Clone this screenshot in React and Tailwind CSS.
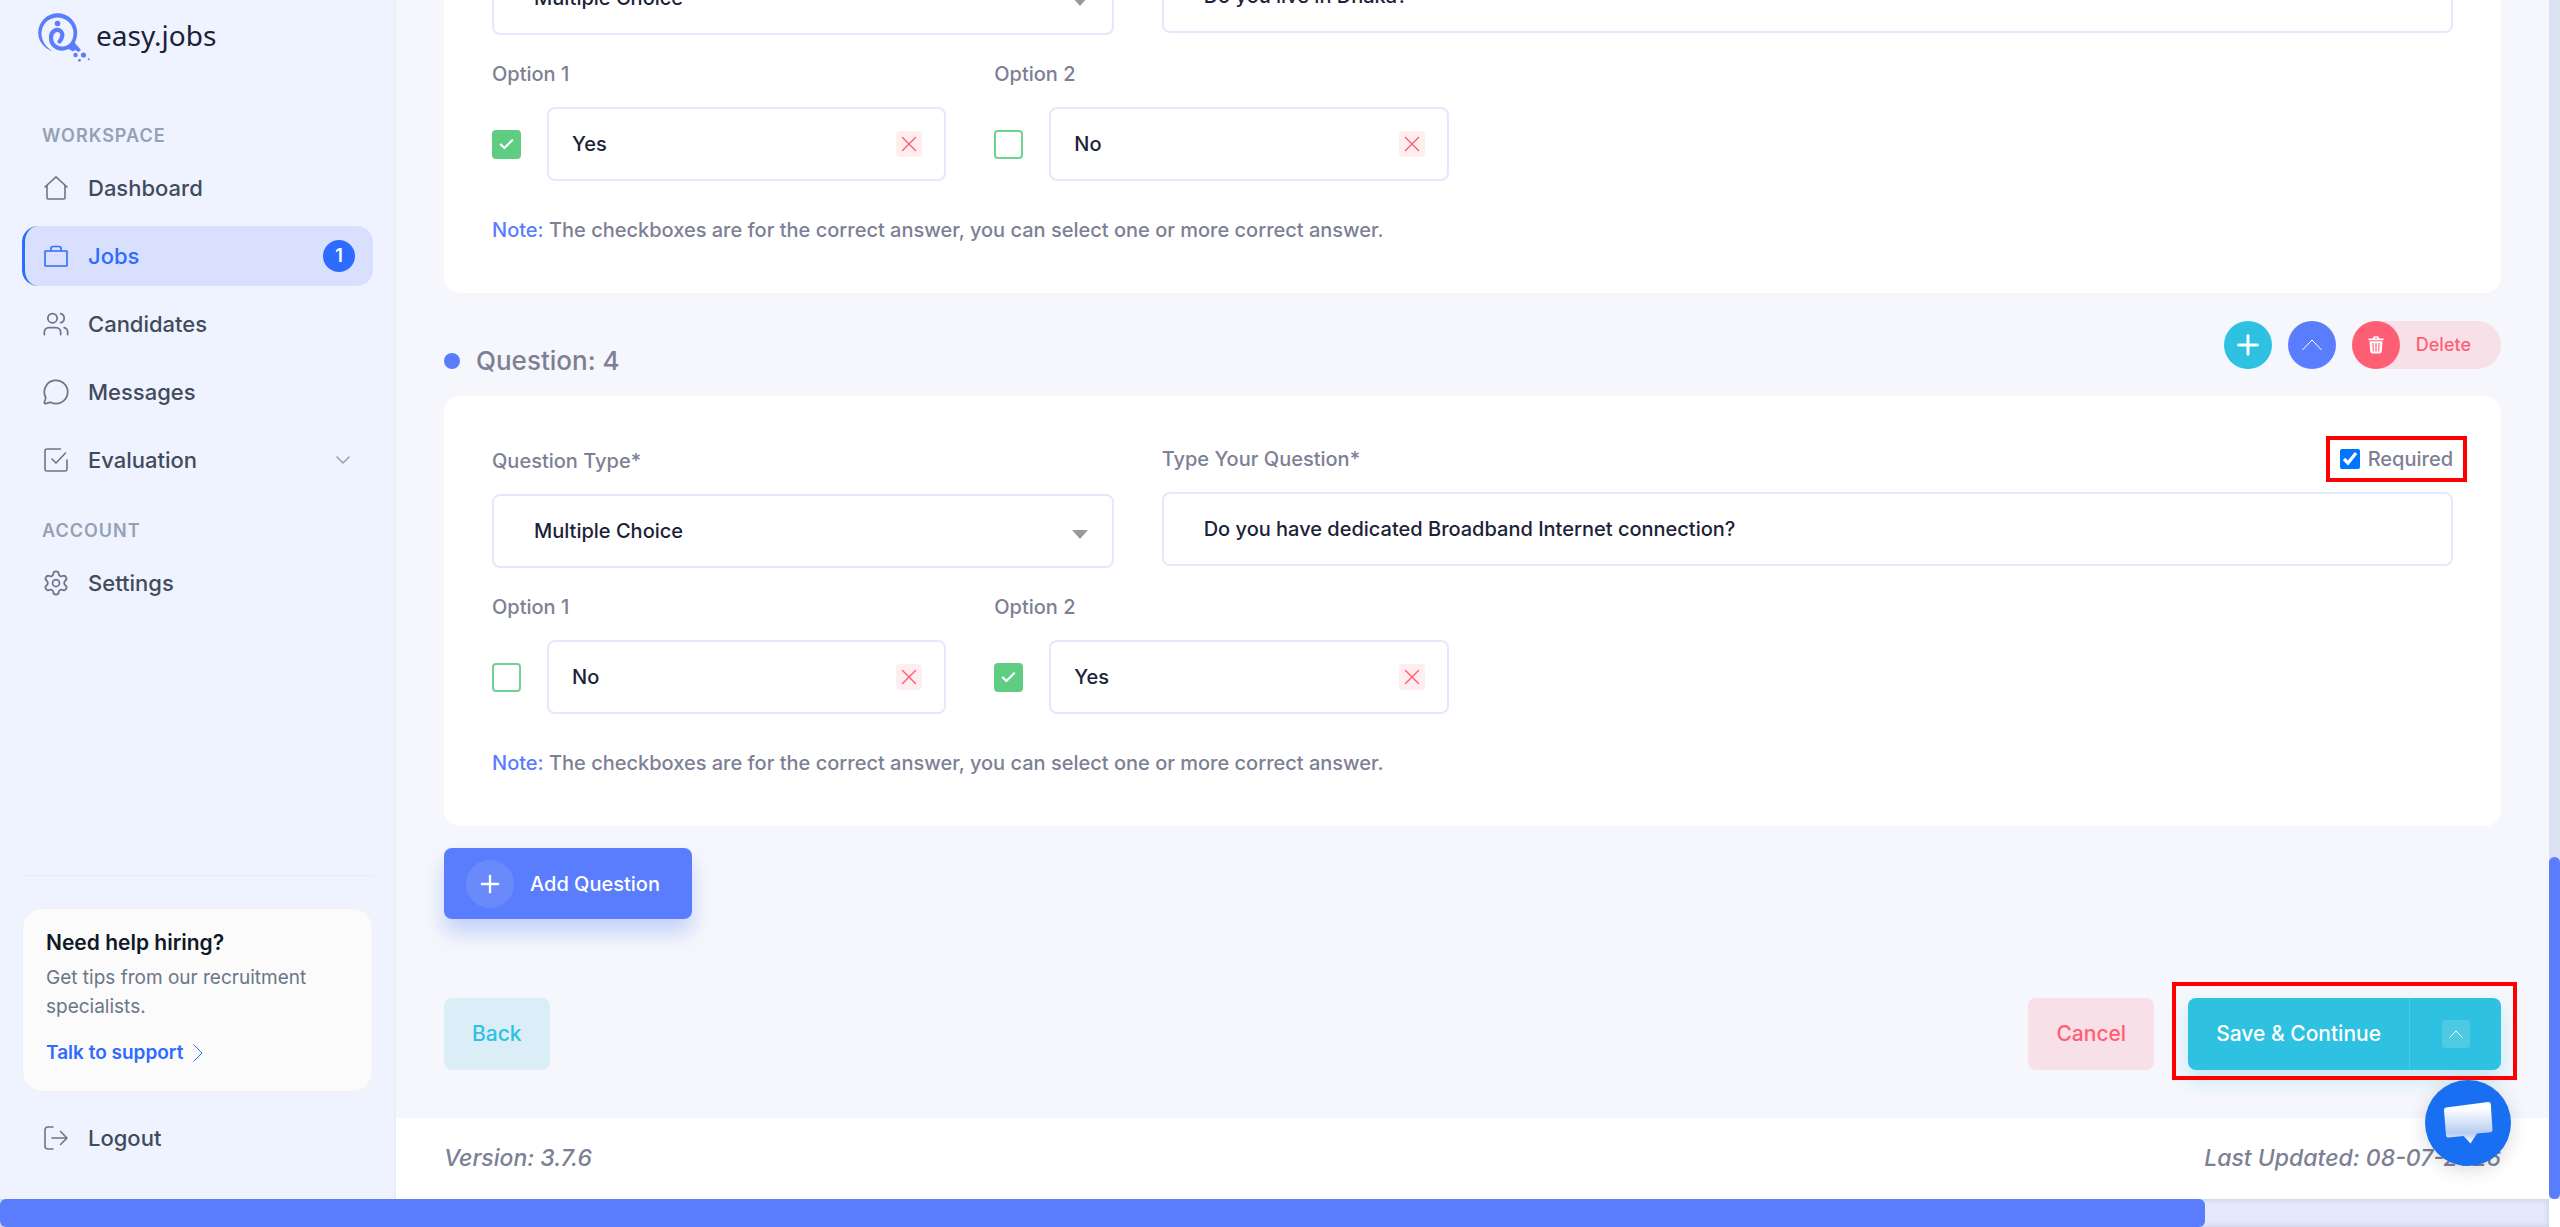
import {
  Check,
  ChevronDown,
  MessageCircle,
  Plus,
  Settings,
  Users,
  X,
} from "lucide-react";

function Logo() {
  return (
    <svg width="52" height="50" viewBox="0 0 52 50" fill="none">
      <path d="M14.500 38.500C5.500 35 .2 27.500 .2 19.800A19.500 19.500 0 0 1 39.200 19.800C39.200 24 38 28 36 31L33 29A16 16 0 1 0 3.500 19.800C3.200 27 7 33.500 14.500 38.500Z" fill="#597dfc" />
      <path
        d="M21.500 28.500C24.500 25 25.500 20.500 22.500 18C18.500 15.500 13 18 13 24.500C13 32 19 36.500 25.500 35.500C29.500 34.800 32.500 33 35 30"
        stroke="#597dfc"
        strokeWidth="4.200"
        strokeLinecap="round"
      />
      <circle cx="19.500" cy="10.500" r="2.800" fill="#597dfc" />
      <path d="M36.500 29.500L43 37L40.500 39L37 37L35 38.500L29.500 35.500Z" fill="#597dfc" />
      <circle cx="37.500" cy="42" r="2.200" fill="#597dfc" />
      <circle cx="45.500" cy="42" r="2.600" fill="#597dfc" />
      <circle cx="41.500" cy="47.300" r="1.400" fill="#597dfc" />
      <circle cx="50.700" cy="46.300" r="1" fill="#597dfc" />
    </svg>
  );
}

function HomeIcon() {
  return (
    <svg width="28" height="28" viewBox="0 0 28 28" fill="none" stroke="currentColor" strokeWidth="1.600" strokeLinejoin="round" strokeLinecap="round">
      <path d="M3 13L14 2.800L25 13" />
      <path d="M5 11.500V24Q5 25 6 25H22Q23 25 23 24V11.500" />
    </svg>
  );
}

function BriefcaseIcon() {
  return (
    <svg width="28" height="28" viewBox="0 0 28 28" fill="none" stroke="currentColor" strokeWidth="1.600" strokeLinejoin="round">
      <rect x="3" y="9" width="22" height="15" rx=".6" />
      <path d="M9 9V6.500Q9 4.500 11 4.500H17Q19 4.500 19 6.500V9" />
    </svg>
  );
}

function EvaluationIcon() {
  return (
    <svg width="28" height="28" viewBox="0 0 28 28" fill="none" stroke="currentColor" strokeWidth="1.600" strokeLinejoin="round" strokeLinecap="round">
      <path d="M18.500 3H5Q3 3 3 5V23Q3 25 5 25H23Q25 25 25 23V14" />
      <path d="M10 13L14 17L23.500 7" />
    </svg>
  );
}

function LogoutIcon() {
  return (
    <svg width="28" height="28" viewBox="0 0 28 28" fill="none" stroke="currentColor" strokeWidth="1.600" strokeLinejoin="round" strokeLinecap="round">
      <path d="M11 3H6Q3 3 3 6V22Q3 25 6 25H11" />
      <path d="M10 14H25M18.500 7.500L25 14L18.500 20.500" />
    </svg>
  );
}

function TrashIcon() {
  return (
    <svg width="16" height="18" viewBox="0 0 16 18" fill="#fff">
      <path d="M5 2.500V1.800Q5 .3 6.500 .3H9.500Q11 .3 11 1.800V2.500H15.500V4.200H.5V2.500ZM6.500 2.500H9.500V1.700H6.500Z" />
      <path fillRule="evenodd" d="M1.500 5.200H14.500L13.700 15.500Q13.500 17.500 11.500 17.500H4.500Q2.500 17.500 2.300 15.500ZM4.300 7L4.800 15.500H5.900L5.400 7ZM7.400 7V15.500H8.600V7ZM10.600 7L10.100 15.500H11.200L11.700 7Z" />
    </svg>
  );
}

function ChatIcon() {
  return (
    <svg width="50" height="44" viewBox="0 0 50 44">
      <defs>
        <linearGradient id="bubble" x1="0" y1="0" x2="0" y2="1">
          <stop offset="0.150" stopColor="#fff" />
          <stop offset="0.750" stopColor="#b7ccf3" />
          <stop offset="1" stopColor="#fff" />
        </linearGradient>
      </defs>
      <path
        d="M3 6.500L45 1Q47.500 .8 47.800 3L49.500 29Q49.500 31 47.500 31.300L34 32.500L27.500 42.500L20.500 35L5.500 36.500Q3.200 36.600 3 34.500L1 9Q.8 6.800 3 6.500Z"
        fill="url(#bubble)"
      />
    </svg>
  );
}

const workspaceLinks = [
  { label: "Dashboard", icon: <HomeIcon /> },
  { label: "Jobs", icon: <BriefcaseIcon />, active: true, badge: 1 },
  { label: "Candidates", icon: <Users size={28} strokeWidth={1.5} /> },
  { label: "Messages", icon: <MessageCircle size={28} strokeWidth={1.5} /> },
  { label: "Evaluation", icon: <EvaluationIcon />, expandable: true },
];

function NavItem({ label, icon, active, badge, expandable }) {
  return (
    <a
      href="#"
      className={
        active
          ? "flex h-[60px] items-center rounded-2xl border-l-3 border-[#2e6bff] bg-[#d8e0fe] pr-[18px] pl-[17px] text-[#2e6bff]"
          : "flex h-[60px] items-center pr-[18px] pl-5 text-[#6b7688]"
      }
    >
      {icon}
      <span className={active ? "ml-[18px] text-[22px] font-medium" : "ml-[18px] text-[22px] font-medium text-[#414b5c]"}>{label}</span>
      {badge && (
        <span className="ml-auto flex size-8 items-center justify-center rounded-full bg-[#2e6bff] text-lg font-semibold text-white">
          {badge}
        </span>
      )}
      {expandable && <ChevronDown size={24} strokeWidth={1.5} className="ml-auto text-[#94a1b5]" />}
    </a>
  );
}

function Sidebar() {
  return (
    <aside className="flex w-[396px] shrink-0 flex-col border-r-2 border-[#e6eefa] bg-[#eff3ff] pr-[21px] pl-[22px]">
      <a href="#" className="mt-[13px] flex items-start gap-1.5 pl-4">
        <Logo />
        <span className="font-['Noto_Sans',sans-serif] text-[28px] leading-[44px] text-[#1c2238]">easy.jobs</span>
      </a>
      <h2 className="mt-[59px] pl-5 text-lg leading-7 font-semibold tracking-[1px] text-[#94a1b5]">WORKSPACE</h2>
      <nav className="mt-2 flex flex-col gap-2">
        {workspaceLinks.map((link) => (
          <NavItem key={link.label} {...link} />
        ))}
      </nav>
      <h2 className="mt-[27px] pl-5 text-lg leading-7 font-semibold tracking-[1px] text-[#94a1b5]">ACCOUNT</h2>
      <nav className="mt-2">
        <NavItem label="Settings" icon={<Settings size={28} strokeWidth={1.5} />} />
      </nav>

      <div className="mt-auto border-t border-[#e7ebf5] pt-8 pb-[31px]">
        <section className="rounded-[20px] border border-[#f0f0f3] bg-[#fbfbfb] px-[23px] pt-5 pb-6">
          <h3 className="text-[21px] leading-7 font-semibold text-[#101828]">Need help hiring?</h3>
          <p className="mt-1.5 text-[19px] leading-[29px] text-[#6b7688]">Get tips from our recruitment specialists.</p>
          <a href="#" className="mt-[18px] flex items-center gap-2.5 text-[19px] leading-[28px] font-semibold text-[#2e6bff]">
            Talk to support
            <svg width="10" height="18" viewBox="0 0 10 18" fill="none" stroke="currentColor">
              <path d="M.5 .5L9 9L.5 17.500" />
            </svg>
          </a>
        </section>
        <div className="mt-4">
          <NavItem label="Logout" icon={<LogoutIcon />} />
        </div>
      </div>
    </aside>
  );
}

function QuestionHeader({ number }) {
  return (
    <header className="flex items-start justify-between pt-7 pb-4">
      <h2 className="mt-5 flex items-center gap-4 text-[26px] leading-[39px] font-medium text-[#7d8095]">
        <span className="size-4 rounded-full bg-[#597dfc]" />
        Question: {number}
      </h2>
      <div className="flex gap-4">
        <button aria-label="Add question" className="flex size-12 items-center justify-center rounded-full bg-[#2fc1e1] text-white">
          <Plus size={32} strokeWidth={2.2} />
        </button>
        <button aria-label="Collapse question" className="flex size-12 items-center justify-center rounded-full bg-[#597dfc] text-white">
          <svg width="20" height="12" viewBox="0 0 20 12" fill="none" stroke="currentColor">
            <path d="M.5 11L10 1L19.500 11" />
          </svg>
        </button>
        <button className="flex h-12 items-center rounded-full bg-[#f8e0e8] pr-[30px] text-lg font-medium text-[#ff5f74]">
          <span className="mr-4 flex size-12 items-center justify-center rounded-full bg-[#ff5f74]">
            <TrashIcon />
          </span>
          Delete
        </button>
      </div>
    </header>
  );
}

function Option({ id, number, value, correct }) {
  return (
    <div className="col-span-3">
      <label htmlFor={id} className="block leading-[30px] text-[#7d8095]">Option {number}</label>
      <div className="mt-[18px] flex items-center gap-[26px]">
        <span className="relative flex size-[29px] shrink-0">
          <input
            type="checkbox"
            defaultChecked={correct}
            aria-label={`Option ${number} is correct`}
            className="size-full appearance-none rounded-[4px] border-2 border-[#6dd391] bg-white checked:border-[#5ecd82] checked:bg-[#5ecd82]"
          />
          {correct && <Check size={17} strokeWidth={3} className="pointer-events-none absolute inset-1.5 text-white" />}
        </span>
        <div className="flex h-[74px] min-w-0 flex-1 items-center rounded-lg border-2 border-[#e3e8fe] pr-[22px] pl-[23px]">
          <input id={id} type="text" defaultValue={value} className="min-w-0 flex-1 text-[#1c2238] outline-none" />
          <button aria-label={`Remove option ${number}`} className="flex size-[26px] items-center justify-center rounded-[4px] bg-[#ffeef0] text-[#ff5f74]">
            <X size={28} strokeWidth={1.3} />
          </button>
        </div>
      </div>
    </div>
  );
}

function QuestionCard({ id, question, options, highlighted }) {
  return (
    <section className="rounded-2xl bg-white px-12 pt-12 pb-12 text-[20px] font-medium">
      <div className="grid grid-cols-12 gap-x-12">
        <div className="col-span-4 pt-0.5">
          <label htmlFor={`${id}-type`} className="block leading-[30px] text-[#7d8095]">Question Type*</label>
          <div className="relative mt-[18px]">
            <select
              id={`${id}-type`}
              defaultValue="Multiple Choice"
              className="h-[74px] w-full appearance-none rounded-lg border-2 border-[#e3e8fe] bg-white pl-10 text-[#1c2238]"
            >
              <option>Multiple Choice</option>
            </select>
            <svg width="16" height="9" viewBox="0 0 16 9" className="pointer-events-none absolute top-9 right-[26px]">
              <path d="M0 0H16L8 9Z" fill="#999" />
            </svg>
          </div>
        </div>
        <div className="col-span-8">
          <div className="flex items-center justify-between leading-[30px] text-[#7d8095]">
            <label htmlFor={`${id}-question`}>Type Your Question*</label>
            <label className="relative flex items-center gap-2">
              <input type="checkbox" defaultChecked className="size-5" />
              Required
              {highlighted && <span className="absolute -inset-x-3.5 -inset-y-2 border-4 border-[#ff0000]" />}
            </label>
          </div>
          <input
            id={`${id}-question`}
            type="text"
            defaultValue={question}
            className="mt-[18px] h-[74px] w-full rounded-lg border-2 border-[#e3e8fe] pl-10 text-[#1c2238]"
          />
        </div>
      </div>
      <div className="mt-6 grid grid-cols-12 gap-x-12">
        {options.map((option, i) => (
          <Option key={option.value} id={`${id}-option-${i}`} number={i + 1} {...option} />
        ))}
      </div>
      <p className="mt-[34px] leading-[30px] text-[#7d8095]">
        <span className="text-[#597dfc]">Note:</span> The checkboxes are for the correct answer, you can select one or more correct answer.
      </p>
    </section>
  );
}

function Content() {
  return (
    <main className="relative flex min-w-0 flex-1 flex-col justify-end overflow-hidden bg-[#f5f7fc]">
      <div className="shrink-0 px-12 pb-12">
        <QuestionCard
          id="q3"
          question="Do you live in Dhaka?"
          options={[{ value: "Yes", correct: true }, { value: "No" }]}
        />
        <QuestionHeader number={4} />
        <QuestionCard
          id="q4"
          question="Do you have dedicated Broadband Internet connection?"
          options={[{ value: "No" }, { value: "Yes", correct: true }]}
          highlighted
        />
        <button className="mt-[22px] flex h-[71px] items-center rounded-lg bg-[#597dfc] pr-8 pl-[22px] text-[20px] font-medium text-white shadow-[0_14px_20px_rgba(89,125,252,0.300)]">
          <span className="mr-4 flex size-12 items-center justify-center rounded-full bg-white/10">
            <Plus size={28} strokeWidth={2} />
          </span>
          Add Question
        </button>
        <div className="mt-[79px] flex items-center text-[21px] font-medium">
          <button className="h-[72px] rounded-lg bg-[#dbeef8] px-7 text-[#2fc1e1]">Back</button>
          <button className="ml-auto h-[72px] rounded-lg bg-[#f8e0e8] px-7 text-[#ff5f74]">Cancel</button>
          <div className="relative ml-[34px] flex h-[72px] rounded-lg bg-[#2fc1e1] text-white shadow-[0_10px_20px_rgba(47,193,225,0.250)]">
            <button className="px-7">Save &amp; Continue</button>
            <button aria-label="More save options" className="flex w-[92px] items-center justify-center border-l border-[#4acae6]">
              <span className="flex size-7 items-center justify-center rounded-[4px] bg-white/15">
                <svg width="14" height="8" viewBox="0 0 14 8" fill="none" stroke="currentColor">
                  <path d="M.5 7.500L7 1L13.500 7.500" />
                </svg>
              </span>
            </button>
            <span className="pointer-events-none absolute -inset-x-4 -top-4 -bottom-2.5 border-4 border-[#ff0000]" />
          </div>
        </div>
      </div>
      <footer className="flex h-[81px] shrink-0 items-center justify-between bg-white px-12 text-[23px] font-medium text-[#7d8095] italic">
        <span>Version: 3.7.6</span>
        <span>Last Updated: 08-07-2026</span>
      </footer>
      <button
        aria-label="Open chat"
        className="absolute right-[38px] bottom-[33px] flex size-[86px] items-center justify-center rounded-full bg-[#196ff2] shadow-[0_4px_20px_rgba(0,0,0,0.150)]"
      >
        <ChatIcon />
      </button>
    </main>
  );
}

export default function App() {
  return (
    <div className="flex h-screen flex-col overflow-hidden bg-white font-['Inter',sans-serif]">
      <div className="flex min-h-0 flex-1">
        <Sidebar />
        <Content />
        <div className="flex w-[11px] shrink-0 flex-col justify-end bg-[#dbe0f3]">
          <div className="h-[28.5%] rounded-md bg-[#597dfc]" />
        </div>
      </div>
      <div className="flex h-7 shrink-0">
        <div className="flex-1 bg-[#e3e8fa] shadow-[inset_0_0_6px_rgba(0,0,0,0.120)]">
          <div className="h-full w-[86.5%] rounded-md bg-[#597dfc]" />
        </div>
        <div className="w-[11px] bg-white" />
      </div>
    </div>
  );
}
